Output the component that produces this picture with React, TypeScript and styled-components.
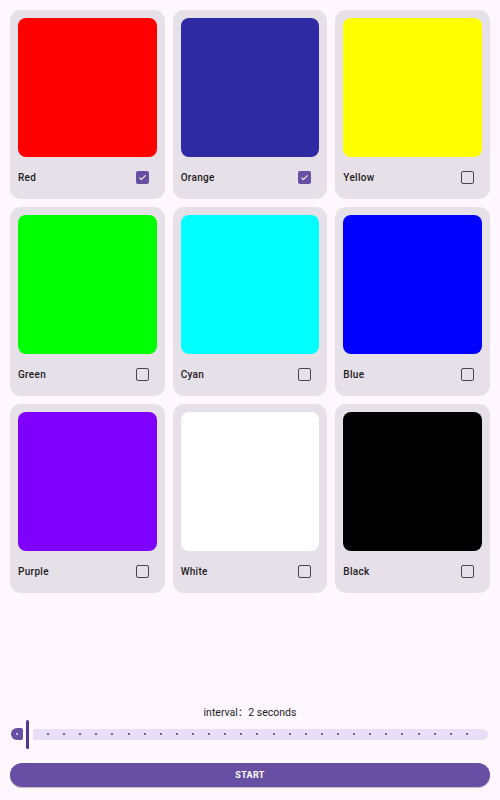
import * as React from 'react';
import styled, { createGlobalStyle } from 'styled-components';

const GlobalStyle = createGlobalStyle`
  html, body {
    margin: 0;
    padding: 0;
    background: #fef7ff;
    font-family: Roboto, "Noto Sans CJK SC", sans-serif;
  }
`;

const Page = styled.div`
  display: flex;
  flex-direction: column;
  height: 800px;
  box-sizing: border-box;
  padding: 10px 10px 13px;
`;

const Grid = styled.div`
  display: grid;
  grid-template-columns: repeat(3, 1fr);
  gap: 8px;
`;

const Card = styled.div`
  background: #e6e0e9;
  border-radius: 11px;
  padding: 8px 8px 2px;
  display: flex;
  flex-direction: column;
`;

const Swatch = styled.div<{ $color: string }>`
  height: 139px;
  border-radius: 8px;
  background: ${(p) => p.$color};
`;

const LabelRow = styled.div`
  height: 40px;
  display: flex;
  align-items: center;
  justify-content: space-between;
  padding-right: 8px;
`;

const Label = styled.span`
  font-size: 10px;
  font-weight: 500;
  letter-spacing: 0.3px;
  color: #1d1b20;
`;

const Box = styled.div<{ $checked: boolean }>`
  width: 13px;
  height: 13px;
  box-sizing: border-box;
  border-radius: 2px;
  border: ${(p) => (p.$checked ? 'none' : '1.5px solid #49454f')};
  background: ${(p) => (p.$checked ? '#6750a4' : 'transparent')};
  display: flex;
  align-items: center;
  justify-content: center;
`;

const Spacer = styled.div`
  flex: 1;
`;

const IntervalText = styled.div`
  text-align: center;
  font-size: 10.5px;
  line-height: 13px;
  color: #1d1b20;
`;

const Slider = styled.div`
  display: flex;
  align-items: center;
  height: 30px;
  margin-left: 1px;
  margin-right: 2px;
`;

const Active = styled.div`
  width: 12px;
  height: 12px;
  background: #6750a4;
  border-radius: 6px 2px 2px 6px;
  display: flex;
  align-items: center;
  justify-content: center;
`;

const Thumb = styled.div`
  width: 3px;
  height: 29px;
  border-radius: 2px;
  background: #4f378b;
  margin: 0 4px 0 3px;
`;

const Inactive = styled.div`
  flex: 1;
  height: 11px;
  background: #e8def8;
  border-radius: 2px 6px 6px 2px;
  display: flex;
  align-items: center;
  justify-content: space-between;
  padding: 0 20px 0 14px;
`;

const Dot = styled.span<{ $light?: boolean }>`
  width: 2px;
  height: 2px;
  border-radius: 1px;
  background: ${(p) => (p.$light ? '#e8def8' : '#4a2c9a')};
`;

const StartButton = styled.button`
  margin-top: 14px;
  height: 24px;
  border: none;
  border-radius: 12px;
  background: #6750a4;
  color: #ffffff;
  font-family: Roboto, sans-serif;
  font-size: 9px;
  font-weight: 700;
  letter-spacing: 0.3px;
  box-shadow: 0 1px 1px rgba(0, 0, 0, 0.25);
`;

const colors = [
  { name: 'Red', color: '#ff0000', checked: true },
  { name: 'Orange', color: '#2e2aa3', checked: true },
  { name: 'Yellow', color: '#ffff00', checked: false },
  { name: 'Green', color: '#00ff00', checked: false },
  { name: 'Cyan', color: '#00ffff', checked: false },
  { name: 'Blue', color: '#0000ff', checked: false },
  { name: 'Purple', color: '#8000ff', checked: false },
  { name: 'White', color: '#ffffff', checked: false },
  { name: 'Black', color: '#000000', checked: false },
];

function Check() {
  return (
    <svg width="9" height="9" viewBox="0 0 24 24">
      <path d="M4 12.5l5 5L20 6.5" fill="none" stroke="#fff" strokeWidth="3" />
    </svg>
  );
}

export default function App() {
  const ticks = Array.from({ length: 27 }, (_, i) => i);
  return (
    <Page>
      <GlobalStyle />
      <Grid>
        {colors.map((c) => (
          <Card key={c.name}>
            <Swatch $color={c.color} />
            <LabelRow>
              <Label>{c.name}</Label>
              <Box $checked={c.checked}>{c.checked && <Check />}</Box>
            </LabelRow>
          </Card>
        ))}
      </Grid>
      <Spacer />
      <IntervalText>interval：2 seconds</IntervalText>
      <Slider>
        <Active>
          <Dot $light />
        </Active>
        <Thumb />
        <Inactive>
          {ticks.map((t) => (
            <Dot key={t} />
          ))}
        </Inactive>
      </Slider>
      <StartButton>START</StartButton>
    </Page>
  );
}
